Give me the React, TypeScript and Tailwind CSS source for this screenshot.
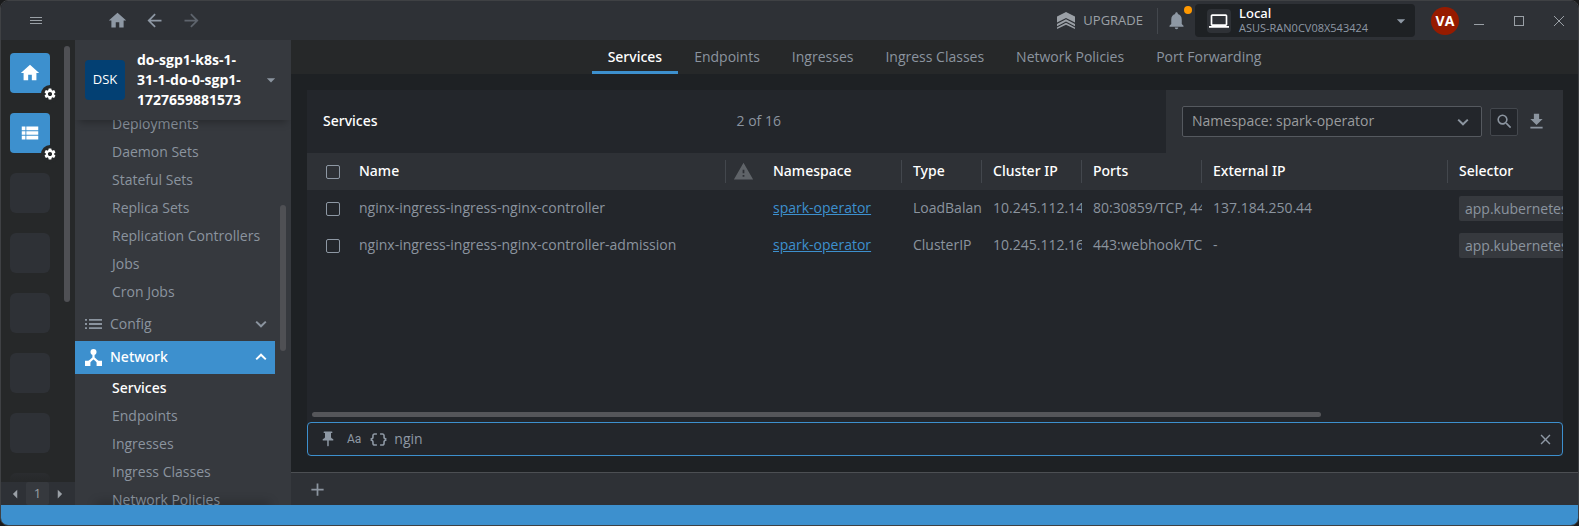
import type { ReactNode } from "react";
import {
  MdAdd,
  MdArrowBack,
  MdArrowDropDown,
  MdArrowForward,
  MdArrowLeft,
  MdArrowRight,
  MdClose,
  MdDataObject,
  MdFileDownload,
  MdHome,
  MdLaptop,
  MdNotifications,
  MdPushPin,
  MdSearch,
  MdSettings,
  MdViewList,
  MdWarning,
} from "react-icons/md";

const tabs = ["Services", "Endpoints", "Ingresses", "Ingress Classes", "Network Policies", "Port Forwarding"];

const workloads = [
  "Deployments",
  "Daemon Sets",
  "Stateful Sets",
  "Replica Sets",
  "Replication Controllers",
  "Jobs",
  "Cron Jobs",
];

const network = ["Services", "Endpoints", "Ingresses", "Ingress Classes", "Network Policies"];

const services = [
  {
    name: "nginx-ingress-ingress-nginx-controller",
    namespace: "spark-operator",
    type: "LoadBalancer",
    clusterIp: "10.245.112.14",
    ports: "80:30859/TCP, 443",
    externalIp: "137.184.250.44",
    selector: "app.kubernetes.io",
  },
  {
    name: "nginx-ingress-ingress-nginx-controller-admission",
    namespace: "spark-operator",
    type: "ClusterIP",
    clusterIp: "10.245.112.16",
    ports: "443:webhook/TCP",
    externalIp: "-",
    selector: "app.kubernetes.io",
  },
];

function UpgradeIcon() {
  return (
    <svg viewBox="0 0 18 17" className="h-[17px] w-[18px]" fill="currentColor" aria-hidden="true">
      <path d="M9 0 18 4.6V10.6L9 6 0 10.6V4.6z" />
      <path d="M9 7.2 18 12V14.2L9 9.4 0 14.2V12z" />
      <path d="M9 10.8 18 15.4V17L9 12.8 0 17V15.4z" />
    </svg>
  );
}

function NetworkIcon() {
  return (
    <svg viewBox="0 0 17 17" className="size-[17px]" fill="currentColor" aria-hidden="true">
      <circle cx="8.5" cy="3" r="3" />
      <path d="M0 11.7h5.4V17H0zM11.6 11.7H17V17h-5.4z" />
      <path d="M8.5 4v5M3.2 13.6 8.5 9l5.3 4.6" fill="none" stroke="currentColor" strokeWidth="2.2" />
    </svg>
  );
}

function ConfigIcon() {
  return (
    <svg viewBox="0 0 17 10" className="h-2.5 w-[17px]" fill="currentColor" aria-hidden="true">
      <path d="M0 0h2v1.8H0zM0 4.1h2v1.8H0zM0 8.2h2V10H0zM4 0h13v1.8H4zM4 4.1h13v1.8H4zM4 8.2h13V10H4z" />
    </svg>
  );
}

function Chevron({ up = false }: { up?: boolean }) {
  return (
    <svg viewBox="0 0 12 8" className="h-2 w-3" fill="none" stroke="currentColor" strokeWidth="2" aria-hidden="true">
      <path d={up ? "M1.2 6.4 6 1.7l4.8 4.7" : "M1.2 1.6 6 6.3l4.8-4.7"} />
    </svg>
  );
}

function TitleBar() {
  return (
    <header className="flex h-[39px] shrink-0 items-center bg-[#2e3136] text-[#8e98a4]">
      <button aria-label="Menu" className="ml-[29px] flex w-3 flex-col gap-[2px]">
        <span className="h-px w-full bg-[#9aa0a6]" />
        <span className="h-px w-full bg-[#9aa0a6]" />
        <span className="h-px w-full bg-[#9aa0a6]" />
      </button>
      <nav aria-label="History" className="ml-[65px] flex items-center gap-4">
        <button aria-label="Home"><MdHome size={21} /></button>
        <button aria-label="Back"><MdArrowBack size={21} /></button>
        <button aria-label="Forward" className="opacity-50"><MdArrowForward size={21} /></button>
      </nav>
      <div className="ml-auto flex h-full items-center">
        <button className="flex items-center gap-2 text-[13px] text-[#9ba0a6]">
          <UpgradeIcon />
          UPGRADE
        </button>
        <span className="ml-3.5 h-[26px] w-px bg-[#43474d]" />
        <button aria-label="Notifications" className="relative ml-2">
          <MdNotifications size={21} />
          <span className="absolute -top-1 right-[-5px] size-2 rounded-full bg-[#ff9800]" />
        </button>
        <button className="ml-2 flex h-[33px] w-[220px] items-center rounded bg-[#1e2124] pl-3 text-left">
          <span className="flex size-6 items-center justify-center rounded bg-[#2e3136] text-white">
            <MdLaptop size={20} />
          </span>
          <span className="ml-2 flex flex-1 flex-col">
            <span className="font-['Noto_Sans',sans-serif] text-[13px] leading-[15px] font-medium text-white">Local</span>
            <span className="text-[11px] leading-[14px]">ASUS-RAN0CV08X543424</span>
          </span>
          <MdArrowDropDown size={20} className="mr-1" />
        </button>
        <span className="ml-4 flex size-7 items-center justify-center rounded-full bg-[#961b00] text-sm font-bold text-white">
          VA
        </span>
        <button aria-label="Minimize" className="ml-[15px] flex h-4 w-2.5 items-end pb-1">
          <span className="h-px w-full bg-[#9aa0a6]" />
        </button>
        <button aria-label="Maximize" className="ml-[30px] size-[10px] border border-[#9aa0a6]" />
        <button aria-label="Close" className="mr-3.5 ml-[30px]">
          <svg viewBox="0 0 10 10" className="size-[10px]" stroke="#9aa0a6" fill="none">
            <path d="M0 0 10 10M10 0 0 10" />
          </svg>
        </button>
      </div>
    </header>
  );
}

function HotbarTile({ label, children }: { label: string; children: ReactNode }) {
  return (
    <button
      aria-label={label}
      className="relative flex size-10 shrink-0 items-center justify-center rounded bg-[#3d90ce] text-white"
    >
      {children}
      <span className="absolute -right-[9px] -bottom-[10px] flex size-[18px] items-center justify-center rounded-full bg-[#262829]">
        <MdSettings size={14} />
      </span>
    </button>
  );
}

function Hotbar() {
  return (
    <aside className="flex w-[74px] shrink-0 flex-col bg-[#262829]">
      <div className="flex min-h-0 flex-1 overflow-hidden">
        <div className="flex flex-1 flex-col gap-5 pt-[13px] pl-[9px]">
          <HotbarTile label="Home"><MdHome size={22} /></HotbarTile>
          <HotbarTile label="Catalog"><MdViewList size={22} /></HotbarTile>
          {[1, 2, 3, 4, 5].map((n) => (
            <div key={n} className="size-10 shrink-0 rounded-md bg-[#2e3136]" />
          ))}
          <div className="size-10 shrink-0 rounded-md bg-linear-to-b from-[#2a2c2f] to-[#262829] to-25%" />
        </div>
        <div className="mt-1.5 mr-[5px] h-64 w-1.5 rounded-full bg-[#4f5054]" />
      </div>
      <div className="flex h-[23px] shrink-0 items-center bg-[#2e3136] text-[13px] text-[#9aa0a6]">
        <button aria-label="Previous" className="flex w-[25px] justify-center pl-1"><MdArrowLeft size={24} /></button>
        <button className="h-full w-[23px] rounded-xs bg-[#36393e]">1</button>
        <button aria-label="Next" className="flex w-[25px] justify-center pr-1"><MdArrowRight size={24} /></button>
      </div>
    </aside>
  );
}

function SubItems({ items, active }: { items: string[]; active?: string }) {
  return (
    <ul className="pl-[37px]">
      {items.map((item) => (
        <li key={item} className="flex h-[28px] items-center">
          <a href="#" className={item === active ? "font-['Noto_Sans',sans-serif] font-medium text-white" : ""}>
            {item}
          </a>
        </li>
      ))}
    </ul>
  );
}

function Sidebar() {
  return (
    <aside className="flex w-[216px] shrink-0 flex-col overflow-hidden bg-[#36393e] text-[#8b949f]">
      <button className="z-10 flex h-20 shrink-0 items-center bg-[#36393e] pl-2.5 text-left shadow-[0_6px_8px_-4px_rgba(0,0,0,0.3)]">
        <span className="flex size-10 items-center justify-center rounded bg-[#034073] text-[13px] text-white">DSK</span>
        <span className="ml-3 w-[116px] text-sm leading-5 font-bold text-white">
          do-sgp1-k8s-1-
          <br />
          31-1-do-0-sgp1-
          <br />
          1727659881573
        </span>
        <MdArrowDropDown size={20} className="ml-2" />
      </button>
      <div className="flex min-h-0 flex-1 overflow-hidden text-sm">
        <nav aria-label="Cluster" className="-mt-2.5 w-[200px]">
          <SubItems items={workloads} />
          <button className="mt-px flex h-[34px] w-full items-center pr-2 pl-2.5">
            <ConfigIcon />
            <span className="ml-2">Config</span>
            <span className="ml-auto"><Chevron /></span>
          </button>
          <button className="flex h-[33px] w-full items-center bg-[#3d90ce] pr-2 pb-px pl-2.5 font-['Noto_Sans',sans-serif] font-medium text-white">
            <NetworkIcon />
            <span className="ml-2">Network</span>
            <span className="ml-auto"><Chevron up /></span>
          </button>
          <SubItems items={network} active="Services" />
        </nav>
        <div className="mt-[85px] ml-[5px] h-[146px] w-1.5 rounded-full bg-[#4f5054]" />
      </div>
      <div className="z-10 mx-6 h-0 shrink-0 shadow-[0_0_10px_3px_rgba(0,0,0,0.25)]" />
    </aside>
  );
}

function HeadCell({ children }: { children: ReactNode }) {
  return (
    <th className="py-[7px] pl-[11px] text-left font-['Noto_Sans',sans-serif] font-medium">
      <div className="flex h-[23px] items-center border-r border-[#43474d] pb-0.5">{children}</div>
    </th>
  );
}

function Cell({ children }: { children: ReactNode }) {
  return <td className="overflow-hidden pb-0.5 pl-[11px] whitespace-nowrap">{children}</td>;
}

function Check({ label }: { label: string }) {
  return (
    <input
      type="checkbox"
      aria-label={label}
      className="block size-3.5 appearance-none rounded-xs border border-[#8e98a4]"
    />
  );
}

function ServicesPanel() {
  return (
    <section className="m-4 mr-[15px] flex min-h-0 flex-1 flex-col bg-[#23262b]">
      <div className="flex h-[63px] shrink-0 items-stretch">
        <div className="grid flex-1 grid-cols-2 items-center px-4 pb-0.5">
          <h1 className="font-['Noto_Sans',sans-serif] font-medium text-white">Services</h1>
          <span>2 of 16</span>
        </div>
        <div className="flex w-[397px] items-center bg-[#2e3136] pl-4">
          <div className="grid w-[300px] items-center">
            <select
              aria-label="Namespace"
              className="col-start-1 row-start-1 h-[31px] appearance-none rounded-xs border border-[#55595f] bg-[#23262b] pb-0.5 pl-[9px] text-[#9a9c9e]"
            >
              <option>Namespace: spark-operator</option>
            </select>
            <span className="pointer-events-none col-start-1 row-start-1 mr-[13px] justify-self-end">
              <Chevron />
            </span>
          </div>
          <button
            aria-label="Search"
            className="ml-2 flex size-7 items-center justify-center rounded-xs border border-[#43474d] bg-[#23262b]"
          >
            <MdSearch size={19} />
          </button>
          <button aria-label="Download" className="ml-2"><MdFileDownload size={21} /></button>
        </div>
      </div>
      <div className="min-h-0 flex-1 overflow-hidden">
        <table className="w-full min-w-[1556px] table-fixed">
          <colgroup>
            <col className="w-[41px]" />
            <col className="w-[378px]" />
            <col className="w-9" />
            <col className="w-[140px]" />
            <col className="w-20" />
            <col className="w-[100px]" />
            <col className="w-[120px]" />
            <col className="w-[246px]" />
            <col />
          </colgroup>
          <thead>
            <tr className="h-[37px] bg-[#2e3136] text-white">
              <th className="pl-[19px]"><Check label="Select all" /></th>
              <HeadCell>Name</HeadCell>
              <th className="pl-[7px] text-[#5f6368]"><MdWarning size={21} aria-label="Warnings" /></th>
              <HeadCell>Namespace</HeadCell>
              <HeadCell>Type</HeadCell>
              <HeadCell>Cluster IP</HeadCell>
              <HeadCell>Ports</HeadCell>
              <HeadCell>External IP</HeadCell>
              <HeadCell>Selector</HeadCell>
            </tr>
          </thead>
          <tbody>
            {services.map((s) => (
              <tr key={s.name} className="h-[37px]">
                <td className="pl-[19px]"><Check label={s.name} /></td>
                <Cell>{s.name}</Cell>
                <td />
                <Cell><a href="#" className="text-[#3d90ce] underline">{s.namespace}</a></Cell>
                <Cell>{s.type}</Cell>
                <Cell>{s.clusterIp}</Cell>
                <Cell>{s.ports}</Cell>
                <Cell>{s.externalIp}</Cell>
                <td className="overflow-hidden pl-[11px] whitespace-nowrap">
                  <span className="inline-block h-[25px] rounded-xs bg-[#36393e] px-1.5 align-middle leading-[25px]">
                    {s.selector}
                  </span>
                </td>
              </tr>
            ))}
          </tbody>
        </table>
      </div>
      <div className="mx-[5px] mb-[5px] h-[5px] shrink-0">
        <div className="h-full w-[81%] rounded-full bg-[#55565a]" />
      </div>
      <div className="flex h-[34px] shrink-0 items-center rounded border border-[#3d90ce] pl-[11px] text-[#8e98a4]">
        <button aria-label="Pin"><MdPushPin size={18} /></button>
        <button aria-label="Match case" className="ml-2.5 font-['Roboto',sans-serif] text-xs">Aa</button>
        <button aria-label="Match expression" className="ml-2"><MdDataObject size={19} /></button>
        <input
          aria-label="Search services"
          defaultValue="ngin"
          className="ml-1.5 min-w-0 flex-1 bg-transparent outline-none"
        />
        <button aria-label="Clear" className="mr-2"><MdClose size={17} /></button>
      </div>
    </section>
  );
}

export default function App() {
  return (
    <div className="h-screen bg-[#1a1b1c] font-['Open_Sans','Noto_Sans',sans-serif]">
      <div className="flex h-full flex-col overflow-hidden rounded-lg border border-[#3f4144]">
        <TitleBar />
        <div className="flex min-h-0 flex-1">
          <Hotbar />
          <Sidebar />
          <main className="flex min-w-0 flex-1 flex-col bg-[#1e2124] text-sm text-[#8b949f]">
            <nav aria-label="Network" className="flex h-[34px] shrink-0 justify-center bg-[#262829]">
              {tabs.map((tab, i) => (
                <a
                  key={tab}
                  href="#"
                  className={
                    i === 0
                      ? "border-b-3 border-[#3d90ce] px-4 font-['Noto_Sans',sans-serif] leading-[34px] font-medium text-white"
                      : "px-4 leading-[34px]"
                  }
                >
                  {tab}
                </a>
              ))}
            </nav>
            <ServicesPanel />
            <footer className="flex h-[33px] shrink-0 items-center border-t border-[#4c4f53] bg-[#2e3136] pl-4">
              <button aria-label="New tab"><MdAdd size={21} /></button>
            </footer>
          </main>
        </div>
        <div className="h-5 shrink-0 bg-[#3d90ce]" />
      </div>
    </div>
  );
}
